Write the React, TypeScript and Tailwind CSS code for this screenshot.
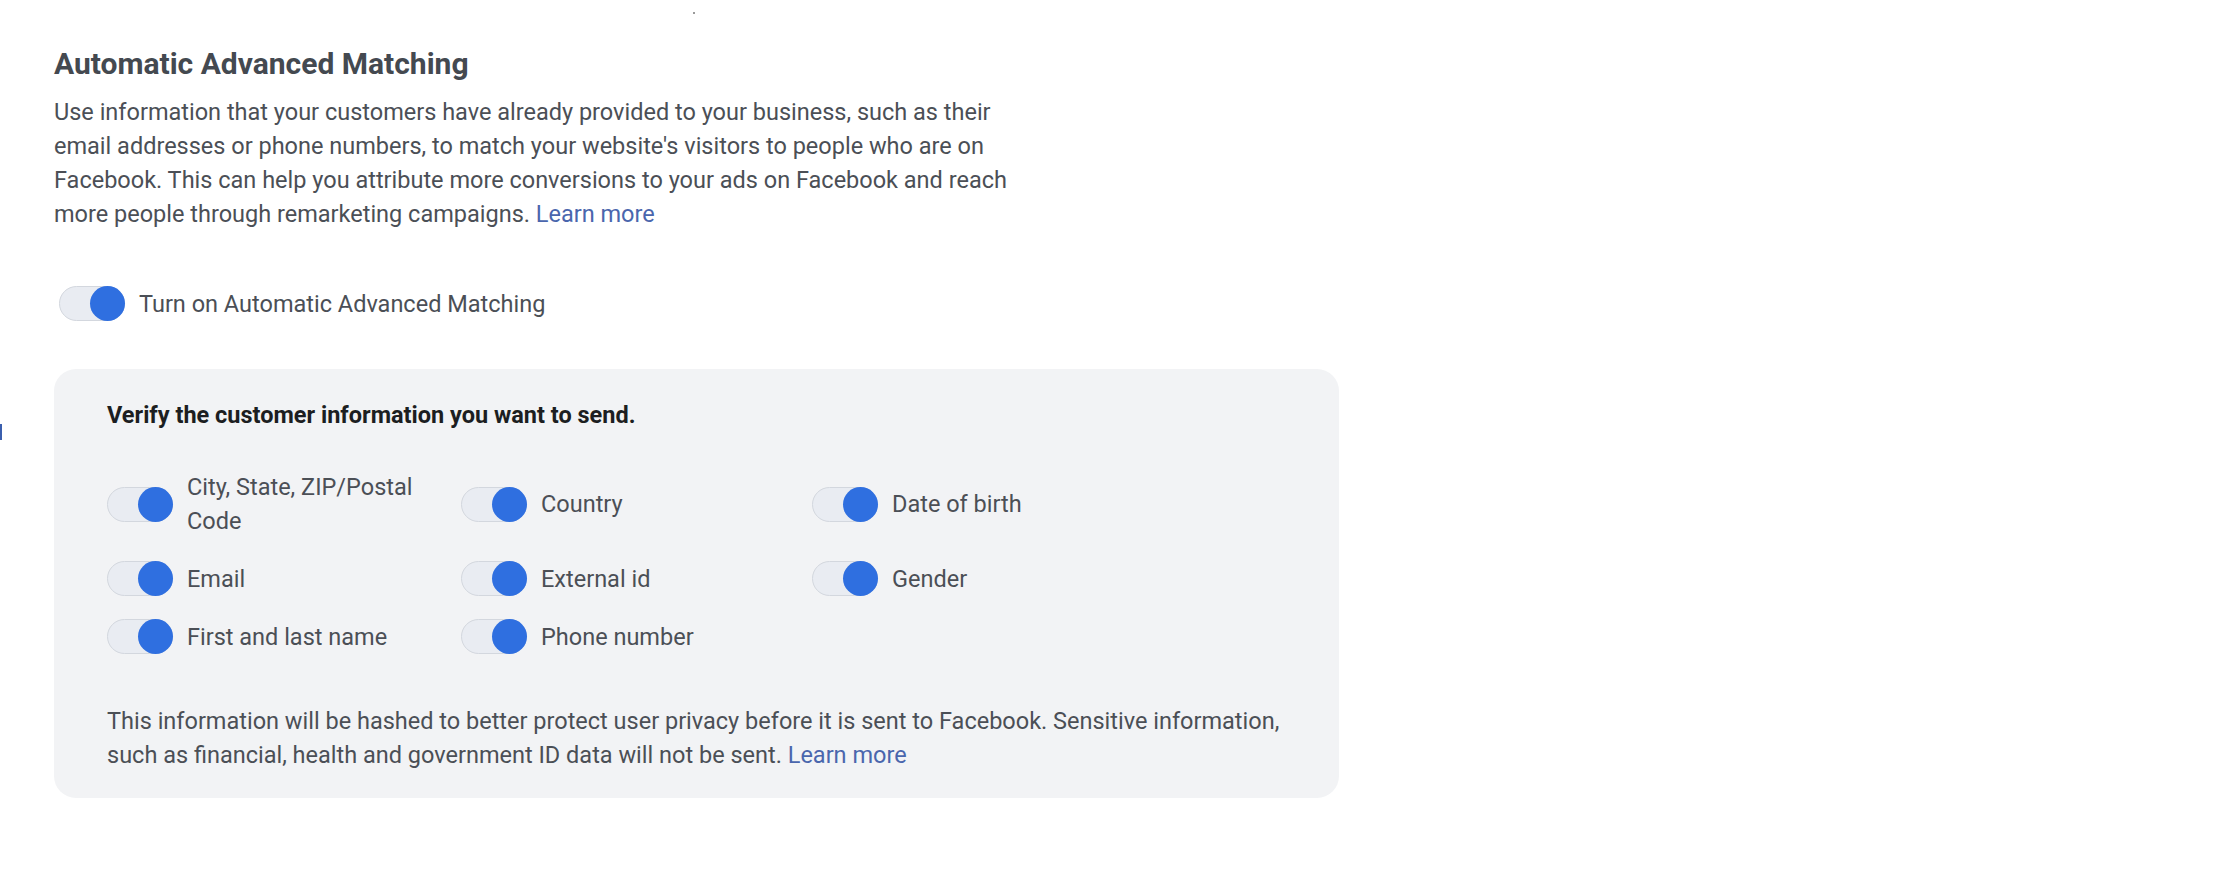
import React from "react";

function Toggle() {
  return (
    <div className="relative h-[35px] w-[66px] shrink-0 rounded-full border border-[#d3d7de] bg-[#e9ecf2]">
      <div className="absolute right-[-1px] top-[-1px] h-[35px] w-[35px] rounded-full bg-[#2f6fe0]" />
    </div>
  );
}

function Item({ label }: { label: string }) {
  return (
    <div className="flex items-center gap-[14px] pr-[40px]">
      <Toggle />
      <span className="text-[23.5px] leading-[34px] text-[#4b4f56]">{label}</span>
    </div>
  );
}

export default function App() {
  return (
    <div
      className="relative h-[874px] w-full bg-white"
      style={{ fontFamily: "Roboto, 'Liberation Sans', sans-serif" }}
    >
      <div className="absolute left-[693px] top-[12px] h-[2px] w-[2px] bg-[#9a9a9a]" />
      <div className="absolute left-0 top-[424px] h-[16px] w-[2px] bg-[#3b5fae]" />

      <div className="flex flex-col pl-[54px] pt-[47px]">
        <h1 className="text-[30px] font-bold leading-[34px] text-[#444950]">
          Automatic Advanced Matching
        </h1>
        <p className="mt-[14px] w-[978px] text-[23.5px] leading-[34px] text-[#4b4f56]">
          Use information that your customers have already provided to your business, such as their
          email addresses or phone numbers, to match your website's visitors to people who are on
          Facebook. This can help you attribute more conversions to your ads on Facebook and reach
          more people through remarketing campaigns.{" "}
          <span className="text-[#4a66ad]">Learn more</span>
        </p>

        <div className="mt-[55px] flex items-center gap-[14px] pl-[5px]">
          <Toggle />
          <span className="text-[23.5px] leading-[34px] text-[#4b4f56]">
            Turn on Automatic Advanced Matching
          </span>
        </div>

        <div className="mt-[48px] w-[1285px] rounded-[22px] bg-[#f2f3f5] px-[53px] pb-[26px] pt-[31px]">
          <div className="text-[23.5px] font-bold leading-[30px] text-[#1c1e21]">
            Verify the customer information you want to send.
          </div>
          <div className="mt-[40px] grid grid-cols-[354px_351px_auto] gap-y-[23px]">
            <Item label="City, State, ZIP/Postal Code" />
            <Item label="Country" />
            <Item label="Date of birth" />
            <Item label="Email" />
            <Item label="External id" />
            <Item label="Gender" />
            <Item label="First and last name" />
            <Item label="Phone number" />
          </div>
          <p className="mt-[50px] text-[23.5px] leading-[34px] text-[#4b4f56]">
            This information will be hashed to better protect user privacy before it is sent to
            Facebook. Sensitive information, such as financial, health and government ID data will
            not be sent. <span className="text-[#4a66ad]">Learn more</span>
          </p>
        </div>
      </div>
    </div>
  );
}
